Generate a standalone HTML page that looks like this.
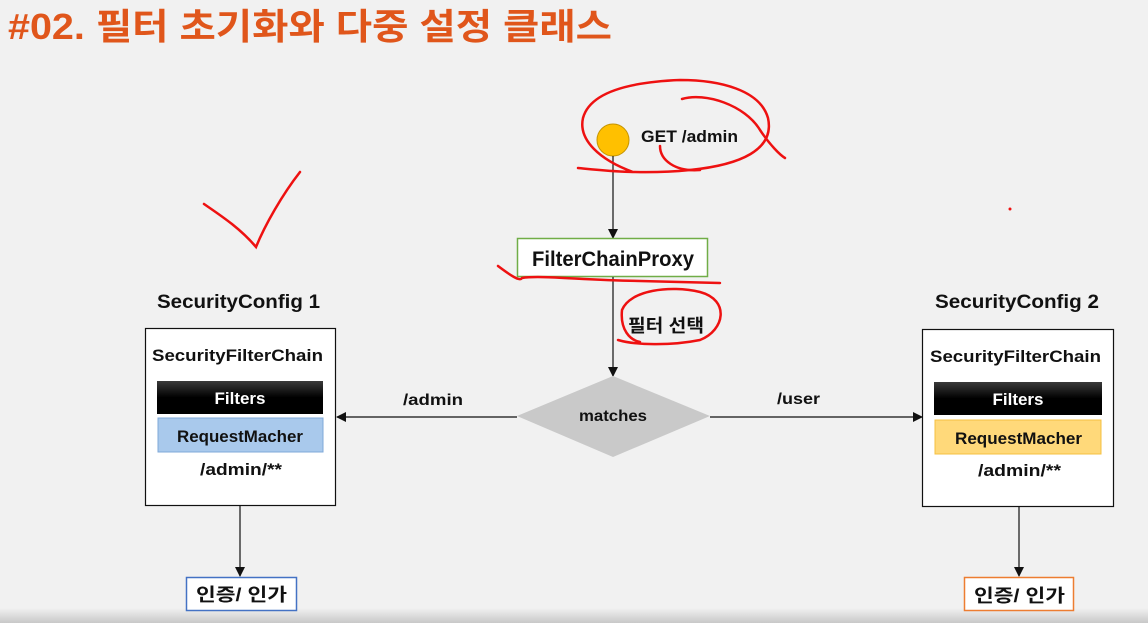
<!DOCTYPE html>
<html><head><meta charset="utf-8"><style>
body{margin:0;width:1148px;height:623px;overflow:hidden;background:#f1f1f1;font-family:"Liberation Sans","Noto Sans CJK KR",sans-serif}
svg{position:absolute;left:0;top:0}
text{font-family:"Liberation Sans","Noto Sans CJK KR",sans-serif;font-weight:bold;fill:#111}
</style></head><body>
<svg width="1148" height="623" viewBox="0 0 1148 623">
<defs>
<marker id="a" markerWidth="10" markerHeight="10" refX="9" refY="5" orient="auto" markerUnits="userSpaceOnUse"><path d="M0,0 L10,5 L0,10z" fill="#111"/></marker>
<linearGradient id="blk" x1="0" y1="0" x2="0" y2="1"><stop offset="0" stop-color="#3a3a3a"/><stop offset="0.5" stop-color="#000"/><stop offset="1" stop-color="#000"/></linearGradient>
<linearGradient id="bot" x1="0" y1="0" x2="0" y2="1"><stop offset="0" stop-color="#f1f1f1"/><stop offset="1" stop-color="#c8c8c8"/></linearGradient>
</defs>
<rect x="0" y="608" width="1148" height="15" fill="url(#bot)"/>
<text x="8" y="39" font-size="36" textLength="604" lengthAdjust="spacingAndGlyphs" style="fill:#e0561b">#02. 필터 초기화와 다중 설정 클래스</text>
<circle cx="613" cy="140" r="16" fill="#ffc000" stroke="#c59400" stroke-width="1"/>
<text x="641" y="142" font-size="17" textLength="97" lengthAdjust="spacingAndGlyphs">GET /admin</text>
<line x1="613" y1="156" x2="613" y2="238" stroke="#111" stroke-width="1.2" marker-end="url(#a)"/>
<rect x="517.5" y="238.5" width="190" height="38" fill="#fff" stroke="#70ad47" stroke-width="1.5"/>
<text x="532" y="266" font-size="21" textLength="162" lengthAdjust="spacingAndGlyphs">FilterChainProxy</text>
<line x1="613" y1="277" x2="613" y2="376" stroke="#111" stroke-width="1.2" marker-end="url(#a)"/>
<text x="628" y="332" font-size="18" textLength="76" lengthAdjust="spacingAndGlyphs">필터 선택</text>
<polygon points="517,416 613,376 710,416 613,457" fill="#c9c9c9"/>
<text x="579" y="421" font-size="16" textLength="68" lengthAdjust="spacingAndGlyphs">matches</text>
<line x1="517" y1="417" x2="337" y2="417" stroke="#111" stroke-width="1.2" marker-end="url(#a)"/>
<text x="403" y="405" font-size="16" textLength="60" lengthAdjust="spacingAndGlyphs">/admin</text>
<line x1="710" y1="417" x2="922" y2="417" stroke="#111" stroke-width="1.2" marker-end="url(#a)"/>
<text x="777" y="404" font-size="16" textLength="43" lengthAdjust="spacingAndGlyphs">/user</text>

<text x="157" y="308" font-size="19" textLength="163" lengthAdjust="spacingAndGlyphs">SecurityConfig 1</text>
<rect x="145.5" y="328.5" width="190" height="177" fill="#fff" stroke="#111" stroke-width="1.2"/>
<text x="152" y="361" font-size="17" textLength="171" lengthAdjust="spacingAndGlyphs">SecurityFilterChain</text>
<rect x="157" y="381" width="166" height="33" fill="url(#blk)"/>
<text x="240" y="404" font-size="17" text-anchor="middle" style="fill:#fff">Filters</text>
<rect x="158" y="418" width="165" height="34" fill="#a9c9ec" stroke="#7fa9d8"/>
<text x="177" y="442" font-size="17" textLength="126" lengthAdjust="spacingAndGlyphs">RequestMacher</text>
<text x="200" y="475" font-size="17" textLength="82" lengthAdjust="spacingAndGlyphs">/admin/**</text>
<line x1="240" y1="505" x2="240" y2="576" stroke="#111" stroke-width="1.2" marker-end="url(#a)"/>
<rect x="186.5" y="577.5" width="110" height="33" fill="#fff" stroke="#4472c4" stroke-width="1.5"/>
<text x="196" y="601" font-size="18" textLength="91" lengthAdjust="spacingAndGlyphs">인증/ 인가</text>

<text x="935" y="308" font-size="19" textLength="164" lengthAdjust="spacingAndGlyphs">SecurityConfig 2</text>
<rect x="922.5" y="329.5" width="191" height="177" fill="#fff" stroke="#111" stroke-width="1.2"/>
<text x="930" y="362" font-size="17" textLength="171" lengthAdjust="spacingAndGlyphs">SecurityFilterChain</text>
<rect x="934" y="382" width="168" height="33" fill="url(#blk)"/>
<text x="1018" y="405" font-size="17" text-anchor="middle" style="fill:#fff">Filters</text>
<rect x="935" y="420" width="166" height="34" fill="#ffd97a" stroke="#f5c040"/>
<text x="955" y="444" font-size="17" textLength="127" lengthAdjust="spacingAndGlyphs">RequestMacher</text>
<text x="978" y="476" font-size="17" textLength="83" lengthAdjust="spacingAndGlyphs">/admin/**</text>
<line x1="1019" y1="506" x2="1019" y2="576" stroke="#111" stroke-width="1.2" marker-end="url(#a)"/>
<rect x="964.5" y="577.5" width="109" height="33" fill="#fff" stroke="#ed7d31" stroke-width="1.5"/>
<text x="974" y="602" font-size="18" textLength="91" lengthAdjust="spacingAndGlyphs">인증/ 인가</text>

<g fill="none" stroke="#ee1111" stroke-width="2.5" stroke-linecap="round">
<path d="M204,204 C220,215 240,228 256,247 C265,225 282,195 300,172"/>
<path d="M578,168 C600,170 640,175 690,170 C740,165 775,150 768,118 C760,90 720,80 680,80 C630,82 590,92 583,118 C578,140 600,160 633,172"/>
<path d="M682,99 C705,92 745,105 760,130 C770,145 780,155 785,158"/>
<path d="M660,146 C660,160 675,172 700,170"/>
<path d="M498,266 C510,275 520,282 522,278 C540,275 580,280 640,281 C680,282 710,283 720,283"/>
<path d="M618,340 C635,345 670,346 700,340 C725,330 730,300 700,292 C670,285 630,290 622,310 C620,330 630,340 640,342"/>
</g>
<circle cx="1010" cy="209" r="1.5" fill="#e11"/>
</svg>
</body></html>
